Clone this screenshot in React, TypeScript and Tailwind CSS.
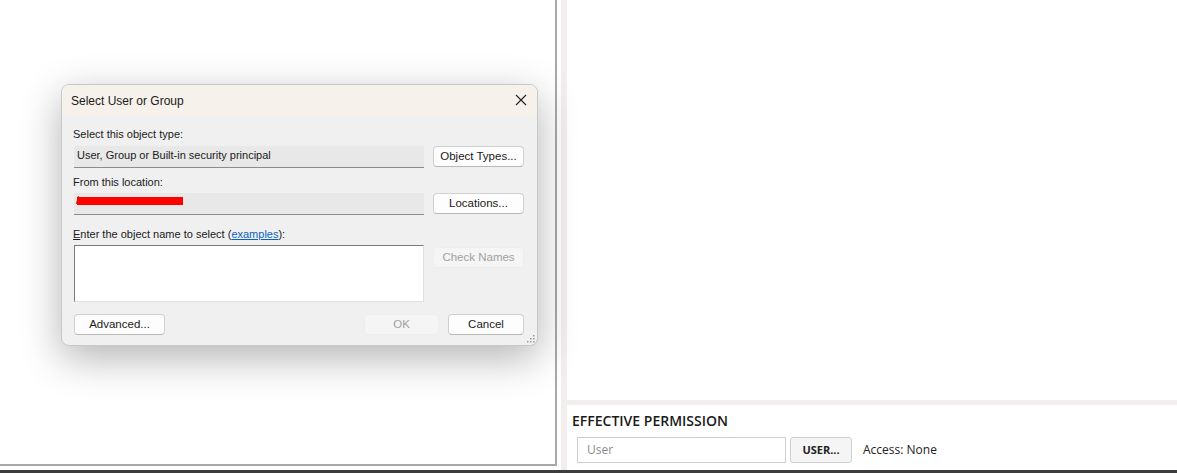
import React from "react";

const ui = { fontFamily: '"Liberation Sans", Arial, sans-serif' };
const os = { fontFamily: '"Open Sans", "Noto Sans", sans-serif' };

function Btn({ children, w, disabled }: { children: React.ReactNode; w: string; disabled?: boolean }) {
  return (
    <div
      className={
        "h-[21px] rounded-[4px] flex items-center justify-center text-[11.5px] " +
        w +
        (disabled
          ? " bg-[#f5f5f5] border border-[#ededed] text-[#a0a0a0]"
          : " bg-[#fdfdfd] border border-[#d0d0d0] border-b-[#b8b8b8] text-[#1a1a1a]")
      }
    >
      {children}
    </div>
  );
}

function Dialog() {
  return (
    <div
      className="w-[477px] h-[262px] rounded-[8px] border border-[#c8c8c8] bg-[#f0f0f0] overflow-hidden flex flex-col shadow-[0_12px_40px_rgba(0,0,0,0.30)] relative"
      style={ui}
    >
      <div className="h-[31px] bg-[#f7f1ec] flex items-center justify-between pl-[9px] pr-[10px] shrink-0">
        <span className="text-[12px] text-[#1a1a1a] mt-[1px]">Select User or Group</span>
        <svg width="12" height="12" viewBox="0 0 12 12" className="mt-[-2px]">
          <path d="M1 1L11 11M11 1L1 11" stroke="#222" strokeWidth="1.1" />
        </svg>
      </div>
      <div className="flex flex-col pl-[11px] pr-[13px] pt-[11px] text-[11px] text-[#1a1a1a]">
        <div className="h-[15px] leading-[15px]">Select this object type:</div>
        <div className="flex items-start gap-[9px] mt-[4px]">
          <div className="w-[351px] h-[22px] bg-[#e8e8e8] border-b-[1.5px] border-[#8c8c8c] ml-[1px] flex items-center pl-[3px] pb-[3px]">
            User, Group or Built-in security principal
          </div>
          <div>
            <Btn w="w-[91px]">Object Types...</Btn>
          </div>
        </div>
        <div className="h-[15px] leading-[15px] mt-[7px]">From this location:</div>
        <div className="flex items-start gap-[9px] mt-[3px]">
          <div className="w-[351px] h-[22px] bg-[#e8e8e8] border-b-[1.5px] border-[#8c8c8c] ml-[1px] flex items-start pl-[2px] pt-[3px]">
            <span className="text-[10px] leading-[10px] text-[#222]">/</span>
            <div className="w-[106px] h-[8px] bg-[#ff0000] ml-[-2px] mt-[1px]" />
          </div>
          <div>
            <Btn w="w-[91px]">Locations...</Btn>
          </div>
        </div>
        <div className="h-[15px] leading-[15px] mt-[12px]">
          <span className="underline">E</span>nter the object name to select (
          <span className="text-[#0b62c4] underline">examples</span>):
        </div>
        <div className="flex items-start gap-[9px] mt-[3px]">
          <div className="w-[351px] h-[57px] bg-white border-l-[1.5px] border-t-[1.5px] border-[#7a7a7a] border-r border-b border-r-[#e0e0e0] border-b-[#e0e0e0] ml-[1px]" />
          <div className="mt-[2px]">
            <Btn w="w-[91px]" disabled>Check Names</Btn>
          </div>
        </div>
        <div className="flex items-center mt-[12px] ml-[1px]">
          <Btn w="w-[92px]">Advanced...</Btn>
          <div className="ml-[199px]">
            <Btn w="w-[75px]" disabled>OK</Btn>
          </div>
          <div className="ml-[9px]">
            <Btn w="w-[76px]">Cancel</Btn>
          </div>
        </div>
      </div>
      <svg width="8" height="8" viewBox="0 0 8 8" className="absolute right-[2px] bottom-[2px]">
        <rect x="6" y="0" width="1.5" height="1.5" fill="#9a9a9a" />
        <rect x="3" y="3" width="1.5" height="1.5" fill="#9a9a9a" />
        <rect x="6" y="3" width="1.5" height="1.5" fill="#9a9a9a" />
        <rect x="0" y="6" width="1.5" height="1.5" fill="#9a9a9a" />
        <rect x="3" y="6" width="1.5" height="1.5" fill="#9a9a9a" />
        <rect x="6" y="6" width="1.5" height="1.5" fill="#9a9a9a" />
      </svg>
    </div>
  );
}

export default function App() {
  return (
    <div className="w-[1177px] h-[473px] bg-white flex flex-col overflow-hidden">
      <div className="flex h-[470px]">
        <div className="w-[561px] h-full flex flex-col">
          <div className="w-[557px] h-[466px] border-r-2 border-b-2 border-[#a8a8a8] pl-[61px] pt-[84px]">
            <Dialog />
          </div>
        </div>
        <div className="w-[6px] h-full bg-[#f2eeed]" />
        <div className="flex-1 flex flex-col">
          <div className="h-[400px]" />
          <div className="h-[5px] bg-[#f2eeed]" />
          <div className="flex flex-col pl-[5px] pt-[6px]" style={os}>
            <div className="text-[14px] font-semibold text-[#1a1a1a] leading-[20px]">EFFECTIVE PERMISSION</div>
            <div className="flex items-center mt-[6px] ml-[5px]">
              <div className="w-[209px] h-[26px] border border-[#cfcfcf] flex items-center pl-[9px] text-[12px] text-[#8a8a8a]">
                User
              </div>
              <div className="w-[62px] h-[26px] ml-[4px] rounded-[3px] border border-[#cfcfcf] bg-[#f5f5f5] flex items-center justify-center text-[11px] font-bold text-[#222]">
                USER...
              </div>
              <div className="ml-[11px] text-[12px] text-[#222]">Access: None</div>
            </div>
          </div>
        </div>
      </div>
      <div className="h-[3px] bg-[#3c3c3c]" />
    </div>
  );
}
